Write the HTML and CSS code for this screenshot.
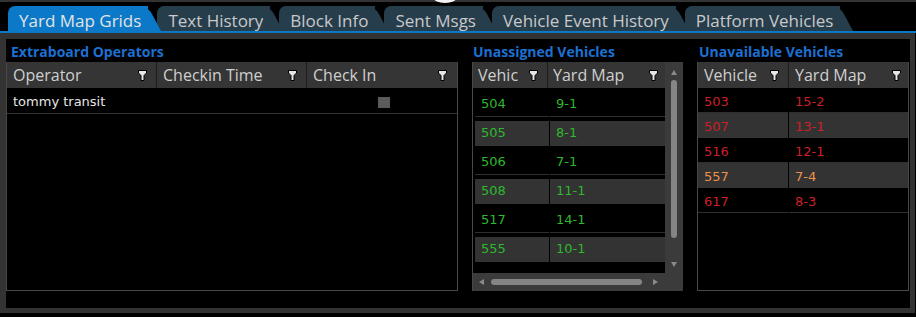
FILE: index.html
```html
<!DOCTYPE html>
<html lang="en">
<head>
    <link rel="stylesheet" href="styles.css">
    <meta charset="UTF-8">
    <title>Yard Map Grids</title>
</head>
<body>

    <!-- Top strip -->
    <div class="topbar"><span class="knob"></span></div>

    <!-- Tabs -->
    <nav class="tabs">
        <a href="#" class="tab active">Yard Map Grids</a>
        <a href="#" class="tab">Text History</a>
        <a href="#" class="tab">Block Info</a>
        <a href="#" class="tab">Sent Msgs</a>
        <a href="#" class="tab">Vehicle Event History</a>
        <a href="#" class="tab">Platform Vehicles</a>
    </nav>
    <div class="tab-line"></div>

    <main class="frame">

        <!-- Extraboard operators -->
        <section class="panel">
            <h2 class="panel-title">Extraboard Operators</h2>
            <div class="grid grid-ops">
                <div class="grid-head">
                    <div class="col col-wide"><span class="col-label">Operator</span><svg class="filter" width="9" height="11" viewBox="0 0 9 11"><path d="M0.5 0.5H8.5V3L6 5.5V10.5H3V5.5L0.5 3Z"/></svg></div>
                    <div class="col col-wide"><span class="col-label">Checkin Time</span><svg class="filter" width="9" height="11" viewBox="0 0 9 11"><path d="M0.5 0.5H8.5V3L6 5.5V10.5H3V5.5L0.5 3Z"/></svg></div>
                    <div class="col col-wide"><span class="col-label">Check In</span><svg class="filter" width="9" height="11" viewBox="0 0 9 11"><path d="M0.5 0.5H8.5V3L6 5.5V10.5H3V5.5L0.5 3Z"/></svg></div>
                </div>
                <div class="ops-row">
                    <div class="ops-cell">tommy transit</div>
                    <div class="ops-cell"></div>
                    <div class="ops-cell ops-check"><span class="check"></span></div>
                </div>
            </div>
        </section>

        <!-- Unassigned vehicles -->
        <section class="panel">
            <h2 class="panel-title title-mid">Unassigned Vehicles</h2>
            <div class="grid grid-scroll">
                <div class="grid-main">
                    <div class="grid-head">
                        <div class="col col-veh"><span class="col-label">Vehic</span><svg class="filter" width="9" height="11" viewBox="0 0 9 11"><path d="M0.5 0.5H8.5V3L6 5.5V10.5H3V5.5L0.5 3Z"/></svg></div>
                        <div class="col col-map"><span class="col-label">Yard Map</span><svg class="filter" width="9" height="11" viewBox="0 0 9 11"><path d="M0.5 0.5H8.5V3L6 5.5V10.5H3V5.5L0.5 3Z"/></svg></div>
                    </div>
                    <div class="unassigned-body">
                        <div class="u-row"><div class="cell c1">504</div><div class="cell c2">9-1</div></div>
                        <div class="u-row alt"><div class="cell c1">505</div><div class="cell c2">8-1</div></div>
                        <div class="u-row"><div class="cell c1">506</div><div class="cell c2">7-1</div></div>
                        <div class="u-row alt"><div class="cell c1">508</div><div class="cell c2">11-1</div></div>
                        <div class="u-row"><div class="cell c1">517</div><div class="cell c2">14-1</div></div>
                        <div class="u-row alt"><div class="cell c1">555</div><div class="cell c2">10-1</div></div>
                    </div>
                </div>
                <div class="vscroll">
                    <span class="arrow-up"></span>
                    <span class="vthumb"></span>
                    <span class="arrow-down"></span>
                </div>
                <div class="hscroll">
                    <span class="arrow-left"></span>
                    <span class="hthumb"></span>
                    <span class="arrow-right"></span>
                </div>
            </div>
        </section>

        <!-- Unavailable vehicles -->
        <section class="panel">
            <h2 class="panel-title title-right">Unavailable Vehicles</h2>
            <div class="grid grid-unavail">
                <div class="grid-head">
                    <div class="col col-veh2"><span class="col-label">Vehicle</span><svg class="filter" width="9" height="11" viewBox="0 0 9 11"><path d="M0.5 0.5H8.5V3L6 5.5V10.5H3V5.5L0.5 3Z"/></svg></div>
                    <div class="col col-map2"><span class="col-label">Yard Map</span><svg class="filter" width="9" height="11" viewBox="0 0 9 11"><path d="M0.5 0.5H8.5V3L6 5.5V10.5H3V5.5L0.5 3Z"/></svg></div>
                </div>
                <div class="r-row"><div class="cell c1">503</div><div class="cell c2">15-2</div></div>
                <div class="r-row alt"><div class="cell c1">507</div><div class="cell c2">13-1</div></div>
                <div class="r-row"><div class="cell c1">516</div><div class="cell c2">12-1</div></div>
                <div class="r-row alt warn"><div class="cell c1">557</div><div class="cell c2">7-4</div></div>
                <div class="r-row"><div class="cell c1">617</div><div class="cell c2">8-3</div></div>
            </div>
        </section>

    </main>

</body>
</html>
```

FILE: styles.css
```css
body {
    margin: 0;
    background-color: #000;
    font-family: 'Open Sans', sans-serif;
    width: 916px;
    height: 317px;
    overflow: hidden;
}
/* Top strip */
.topbar {
    position: relative;
    height: 2px;
    background-color: #333;
}
.knob {
    position: absolute;
    left: 433px;
    top: -9px;
    width: 24px;
    height: 12px;
    border-radius: 50%;
    background-color: #f2f2f2;
}
/* Tabs */
.tabs {
    display: flex;
    height: 25px;
    padding: 4px 0 0 8px;
}
.tab {
    position: relative;
    box-sizing: border-box;
    height: 25px;
    padding: 4px 7px 0 11px;
    margin-right: 9px;
    line-height: 21px;
    font-size: 17px;
    color: #c9c9c9;
    background-color: #263d4c;
    border-radius: 7px 0 0 0;
    white-space: nowrap;
    text-decoration: none;
}
.tab::after {
    content: '';
    position: absolute;
    left: 100%;
    top: 0;
    width: 13px;
    height: 100%;
    background: inherit;
    border-top-right-radius: 8px;
    transform: skewX(28deg);
    transform-origin: bottom left;
}
.tab.active {
    background-color: #0b78c8;
    color: #e4e4e4;
    z-index: 1;
}
.tab-line {
    height: 2px;
    background-color: #0b78c8;
}
/* Content frame */
.frame {
    display: grid;
    grid-template-columns: 452px 211px 212px;
    column-gap: 14px;
    height: 269px;
    margin-right: 1px;
    border: solid #333;
    border-width: 6px 5px 5px 6px;
}
.panel {
    display: flex;
    flex-direction: column;
}
.panel-title {
    margin: 0;
    box-sizing: border-box;
    height: 23px;
    padding: 2px 0 0 5px;
    line-height: 21px;
    font-size: 14px;
    font-weight: bold;
    color: #1d70d2;
}
.title-mid {
    padding-left: 1px;
}
.title-right {
    padding-left: 2px;
}
/* Grids */
.grid {
    box-sizing: border-box;
    height: 229px;
    border: 1px solid #484848;
    border-top: 0;
}
.grid-head {
    display: flex;
    height: 26px;
    background-color: #353535;
}
.col {
    display: flex;
    align-items: center;
    box-sizing: border-box;
    padding: 0 9px 0 6px;
    border-right: 1px solid #1c1c1c;
    font-size: 16px;
    line-height: 26px;
    color: #cfcfcf;
}
.col:last-child {
    border-right: 0;
    padding-right: 7px;
}
.col-label {
    flex: 1;
    overflow: hidden;
    white-space: nowrap;
    margin-right: 9px;
}
.filter {
    flex: none;
    display: block;
    fill: #e6e6e6;
    stroke: #000;
}
.cell {
    box-sizing: border-box;
    height: 25px;
    padding-left: 6px;
    border-bottom: 1px solid #2f2f2f;
    font-family: 'DejaVu Sans', sans-serif;
    font-size: 13px;
    line-height: 24px;
}
.alt .cell {
    background-color: #333;
    border-bottom-color: #333;
}
/* Extraboard operators */
.col-wide {
    width: 150px;
}
.grid-ops .col:last-child {
    padding-right: 10px;
}
.ops-row {
    display: flex;
    box-sizing: border-box;
    height: 26px;
    border-bottom: 1px solid #333;
}
.ops-cell {
    width: 150px;
    padding-left: 6px;
    font-family: 'DejaVu Sans', sans-serif;
    font-size: 13px;
    line-height: 27px;
    color: #e6e6e6;
}
.ops-check {
    display: flex;
    justify-content: center;
    align-items: flex-start;
    padding: 9px 0 0;
}
.check {
    width: 12px;
    height: 11px;
    background-color: #5b5b5b;
}
/* Unassigned vehicles */
.grid-scroll {
    display: grid;
    grid-template-columns: 192px 18px;
    grid-template-rows: 211px 18px;
    border: 0;
    border-left: 1px solid #484848;
}
.grid-main {
    overflow: hidden;
}
.col-veh {
    width: 75px;
    padding-left: 5px;
}
.col-map {
    width: 117px;
    padding-left: 5px;
}
.unassigned-body {
    padding-left: 2px;
}
.u-row {
    display: flex;
    gap: 1px;
    padding-top: 4px;
    color: #2eb82e;
}
.u-row .c1 {
    width: 74px;
}
.u-row .c2 {
    width: 115px;
}
.vscroll {
    display: flex;
    flex-direction: column;
    align-items: center;
    padding: 8px 0 6px;
    background-color: #3b3b3b;
}
.arrow-up {
    border-left: 3px solid transparent;
    border-right: 3px solid transparent;
    border-bottom: 5px solid #8a8a8a;
}
.arrow-down {
    margin-top: auto;
    border-left: 3px solid transparent;
    border-right: 3px solid transparent;
    border-top: 5px solid #8a8a8a;
}
.vthumb {
    width: 6px;
    height: 158px;
    margin-top: 5px;
    border-radius: 3px;
    background-color: #858585;
}
.hscroll {
    grid-column: 1 / 3;
    display: flex;
    align-items: center;
    padding-left: 6px;
    background-color: #3b3b3b;
}
.arrow-left {
    border-top: 3px solid transparent;
    border-bottom: 3px solid transparent;
    border-right: 5px solid #8a8a8a;
}
.arrow-right {
    margin-left: 11px;
    border-top: 3px solid transparent;
    border-bottom: 3px solid transparent;
    border-left: 5px solid #8a8a8a;
}
.hthumb {
    width: 151px;
    height: 6px;
    margin-left: 7px;
    border-radius: 3px;
    background-color: #858585;
}
/* Unavailable vehicles */
.col-veh2 {
    width: 91px;
}
.col-map2 {
    width: 119px;
}
.r-row {
    display: flex;
    gap: 1px;
    color: #cc1f27;
}
.r-row .cell {
    line-height: 27px;
}
.r-row .c1 {
    width: 90px;
}
.r-row .c2 {
    width: 119px;
}
.r-row.warn {
    color: #f0914a;
}
```
